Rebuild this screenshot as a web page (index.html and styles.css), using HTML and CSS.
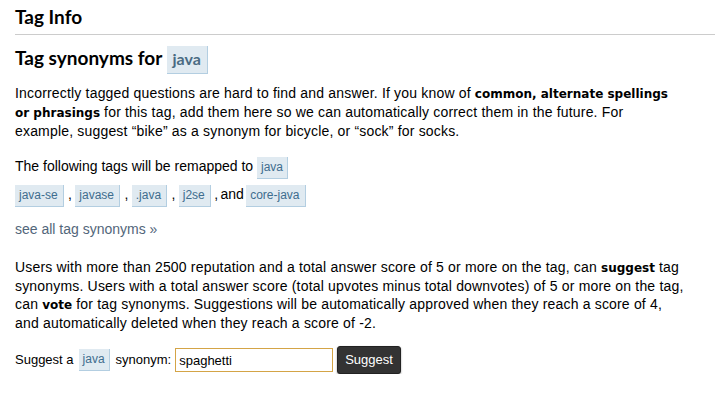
FILE: index.html
```html
<!DOCTYPE html>
<html lang="en">
<head>
  <meta charset="UTF-8">
  <title>Tag Info - java</title>
  <link rel="stylesheet" href="styles.css">
</head>
<body>
  <div class="page">
    <h1 class="page-title">Tag Info</h1>

    <h2 class="section-title">Tag synonyms for <span class="post-tag big">java</span></h2>

    <p class="intro">Incorrectly tagged questions are hard to find and answer. If you know of <b>common, alternate spellings or phrasings</b> for this tag, add them here so we can automatically correct them in the future. For example, suggest “bike” as a synonym for bicycle, or “sock” for socks.</p>

    <p class="remap">The following tags will be remapped to <span class="post-tag">java</span></p>
    <p class="tag-list">
      <span class="post-tag">java-se</span> , <span class="post-tag">javase</span> , <span class="post-tag">.java</span> , <span class="post-tag">j2se</span><span class="last-sep"> , and </span><span class="post-tag">core-java</span>
    </p>

    <p class="see-all"><a href="#">see all tag synonyms »</a></p>

    <p class="rules">Users with more than 2500 reputation and a total answer score of 5 or more on the tag, can <b>suggest</b> tag synonyms. Users with a total answer score (total upvotes minus total downvotes) of 5 or more on the tag, can <b>vote</b> for tag synonyms. Suggestions will be automatically approved when they reach a score of 4, and automatically deleted when they reach a score of -2.</p>

    <form class="suggest-form" onsubmit="return false">
      <span>Suggest a</span>
      <span class="post-tag">java</span>
      <label for="synonym">synonym:</label>
      <input id="synonym" type="text" value="spaghetti">
      <button type="submit">Suggest</button>
    </form>
  </div>
</body>
</html>
```

FILE: styles.css
```css
body {
  margin: 0;
  font-family: 'Liberation Sans', Arial, sans-serif;
  font-size: 14px;
  line-height: 18px;
  letter-spacing: 0.18px;
  color: #000;
  background: #fff;
}

.page {
  padding: 0 32px 0 15px;
}

b {
  font-family: 'DejaVu Sans', Verdana, sans-serif;
  font-size: 12px;
  letter-spacing: 0;
}

.page-title {
  font-family: Lato, 'Open Sans', sans-serif;
  font-size: 19px;
  font-weight: bold;
  line-height: 24px;
  letter-spacing: 0;
  margin: 0 -31px 0 0;
  padding: 5px 0 5px;
  border-bottom: 1px solid #cccccc;
}

.section-title {
  font-family: Lato, 'Open Sans', sans-serif;
  font-size: 19px;
  font-weight: bold;
  line-height: 28px;
  letter-spacing: 0;
  margin: 9px 0 10px;
}

p {
  margin: 0 0 18px;
}

.intro {
  margin-bottom: 17px;
}

.post-tag {
  display: inline-block;
  font-size: 12px;
  line-height: 14px;
  letter-spacing: 0;
  word-spacing: 0;
  color: #3e6d8e;
  background: #e0eaf1;
  border-bottom: 1px solid #b3cee1;
  border-right: 1px solid #b3cee1;
  padding: 3px 4px 4px 4px;
  margin: 0 2px 0 0;
}

.post-tag.big {
  font-family: Lato, 'Open Sans', sans-serif;
  font-size: 16px;
  font-weight: bold;
  line-height: 20px;
  color: #4a6b82;
  padding: 3px 6px 4px 6px;
}

.remap {
  margin-bottom: 6px;
  letter-spacing: 0;
}

.tag-list {
  margin-bottom: 13px;
  letter-spacing: 0;
  word-spacing: -0.5px;
}

.tag-list .post-tag {
  margin: 0 1px 0 0;
  padding: 3px 5px 4px 4px;
}

.tag-list .last-sep {
  word-spacing: -1.5px;
}

.see-all {
  margin-bottom: 20px;
  letter-spacing: 0;
}

.see-all a {
  color: #52667a;
  text-decoration: none;
}

.rules {
  margin-bottom: 14px;
}

.suggest-form {
  display: flex;
  align-items: center;
  font-size: 13px;
  letter-spacing: 0;
}

.suggest-form .post-tag {
  margin: 0 6px 0 5px;
}

.suggest-form label {
  margin-right: 4px;
}

.suggest-form input {
  font-family: 'Liberation Sans', Arial, sans-serif;
  font-size: 13px;
  width: 150px;
  height: 18px;
  padding: 2px 3px;
  border: 1px solid #d4a446;
  outline: none;
  margin: 0 4px 0 0;
}

.suggest-form button {
  font-family: 'Liberation Sans', Arial, sans-serif;
  font-size: 13px;
  line-height: 16px;
  color: #fff;
  background: #333333;
  border: 1px solid #222;
  border-radius: 3px;
  padding: 5px 7px;
  box-shadow: 0 1px 2px rgba(0, 0, 0, 0.4);
  cursor: pointer;
}
```
